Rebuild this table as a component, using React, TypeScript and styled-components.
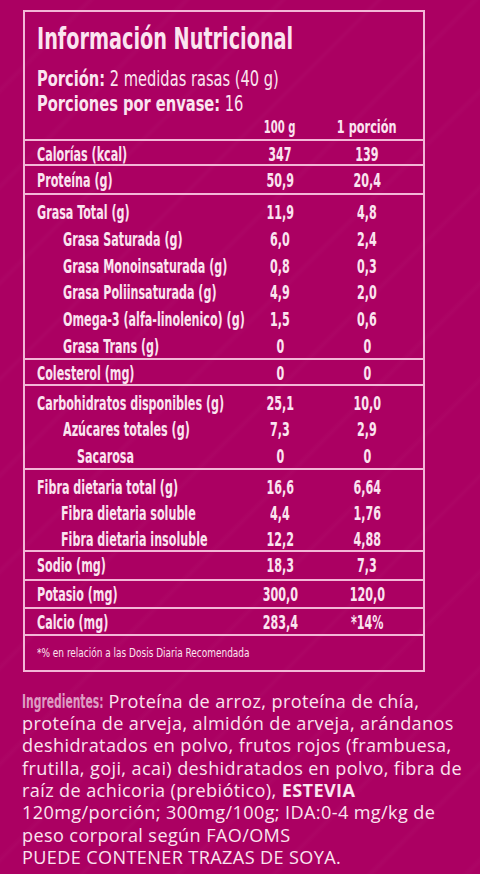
import { createGlobalStyle, styled } from "styled-components";

const GlobalStyle = createGlobalStyle`
  html, body {
    margin: 0;
    padding: 0;
    background: #ab0062;
  }
`;

const COND = `"Liberation Sans Narrow", "DejaVu Sans Condensed", "Liberation Sans", sans-serif`;
const INK = "#fbe4f0";
const RULE = "#f3b7d7";

const Page = styled.div`
  width: 480px;
  height: 874px;
  box-sizing: border-box;
  padding: 10px 22px 0 22px;
  overflow: hidden;
  background:
    repeating-linear-gradient(
      135deg,
      rgba(255, 255, 255, 0) 0px,
      rgba(255, 255, 255, 0) 60px,
      rgba(255, 255, 255, 0.018) 64px,
      rgba(255, 255, 255, 0) 68px
    ),
    #ab0062;
  color: ${INK};
`;

const Panel = styled.div`
  width: 402px;
  margin-left: 1px;
  box-sizing: border-box;
  border: 2px solid ${RULE};
  font-family: ${COND};
`;

const Head = styled.div`
  padding: 11px 12px 0 12px;
`;

const Squeeze = styled.span<{ $k?: number; $origin?: string }>`
  display: inline-block;
  white-space: nowrap;
  transform: scaleX(${(p) => p.$k ?? 0.62});
  transform-origin: ${(p) => p.$origin ?? "left"} center;
`;

const Title = styled.div`
  font-size: 31px;
  line-height: 31px;
  font-weight: 700;
  margin-bottom: 12px;
`;

const Serving = styled.div`
  font-size: 22px;
  line-height: 25px;
  b {
    font-weight: 700;
  }
`;

const Grid = styled.div`
  display: grid;
  grid-template-columns: minmax(0, 1fr) 80px 94px;
  padding: 0 9px 0 12px;
  align-items: center;
`;

const HeaderRow = styled(Grid)`
  box-sizing: border-box;
  height: 25px;
  padding-bottom: 4px;
  font-size: 18px;
  font-weight: 700;
  border-bottom: 2px solid ${RULE};
`;

const Section = styled.div`
  border-bottom: 2px solid ${RULE};
  padding: 1px 0;
`;

const Row = styled(Grid)<{ $h: number; $shift: number }>`
  box-sizing: border-box;
  height: ${(p) => p.$h}px;
  padding-top: ${(p) => p.$shift}px;
  font-size: 20px;
  font-weight: 700;
`;

const Label = styled.div<{ $indent: number }>`
  padding-left: ${(p) => p.$indent}px;
  min-width: 0;
`;

const Value = styled.div`
  text-align: center;
`;

const Footnote = styled.div`
  height: 34px;
  display: flex;
  align-items: center;
  padding-left: 12px;
  font-size: 12px;
`;

const Ingredients = styled.p`
  margin: 18px 0 0 0;
  font-family: "Open Sans", "Liberation Sans", sans-serif;
  font-size: 18.1px;
  letter-spacing: 0.38px;
  line-height: 22.3px;
  color: ${INK};
  white-space: nowrap;
  b {
    font-weight: 700;
  }
`;

const IngLabel = styled.span`
  display: inline-block;
  font-family: ${COND};
  font-weight: 700;
  font-size: 19px;
  letter-spacing: 0;
  color: #dd9dc3;
  transform: scaleX(0.63);
  transform-origin: left center;
  margin-right: -48px;
`;

type Line = [string, string, string, number];

const sections: { h: number; rows: Line[] }[] = [
  { h: 21, rows: [["Calorías (kcal)", "347", "139", 0]] },
  { h: 25, rows: [["Proteína (g)", "50,9", "20,4", 0]] },
  {
    h: 26.8,
    rows: [
      ["Grasa Total (g)", "11,9", "4,8", 0],
      ["Grasa Saturada (g)", "6,0", "2,4", 26],
      ["Grasa Monoinsaturada (g)", "0,8", "0,3", 26],
      ["Grasa Poliinsaturada (g)", "4,9", "2,0", 26],
      ["Omega-3 (alfa-linolenico) (g)", "1,5", "0,6", 26],
      ["Grasa Trans (g)", "0", "0", 26],
    ],
  },
  { h: 22, rows: [["Colesterol (mg)", "0", "0", 0]] },
  {
    h: 26.7,
    rows: [
      ["Carbohidratos disponibles (g)", "25,1", "10,0", 0],
      ["Azúcares totales (g)", "7,3", "2,9", 26],
      ["Sacarosa", "0", "0", 40],
    ],
  },
  {
    h: 26,
    rows: [
      ["Fibra dietaria total (g)", "16,6", "6,64", 0],
      ["Fibra dietaria soluble", "4,4", "1,76", 24],
      ["Fibra dietaria insoluble", "12,2", "4,88", 24],
    ],
  },
  { h: 25, rows: [["Sodio (mg)", "18,3", "7,3", 0]] },
  { h: 24, rows: [["Potasio (mg)", "300,0", "120,0", 0]] },
  { h: 23, rows: [["Calcio (mg)", "283,4", "*14%", 0]] },
];

export default function App() {
  return (
    <Page>
      <GlobalStyle />
      <Panel>
        <Head>
          <Title>
            <Squeeze $k={0.69}>Información Nutricional</Squeeze>
          </Title>
          <Serving>
            <Squeeze $k={0.74}>
              <b>Porción:</b> 2 medidas rasas (40 g)
            </Squeeze>
          </Serving>
          <Serving>
            <Squeeze $k={0.74}>
              <b>Porciones por envase:</b> 16
            </Squeeze>
          </Serving>
        </Head>
        <HeaderRow>
          <span />
          <Value>
            <Squeeze $origin="center" $k={0.62}>100 g</Squeeze>
          </Value>
          <Value>
            <Squeeze $origin="center" $k={0.7}>1 porción</Squeeze>
          </Value>
        </HeaderRow>
        {sections.map((s, i) => (
          <Section key={i}>
            {s.rows.map(([name, a, b, indent]) => (
              <Row key={name} $h={s.h} $shift={s.rows.length > 1 ? 4 : 0}>
                <Label $indent={indent}>
                  <Squeeze>{name}</Squeeze>
                </Label>
                <Value>
                  <Squeeze $origin="center">{a}</Squeeze>
                </Value>
                <Value>
                  <Squeeze $origin="center">{b}</Squeeze>
                </Value>
              </Row>
            ))}
          </Section>
        ))}
        <Footnote>
          <Squeeze $k={0.83}>*% en relación a las Dosis Diaria Recomendada</Squeeze>
        </Footnote>
      </Panel>
      <Ingredients>
        <IngLabel>Ingredientes:</IngLabel> Proteína de arroz, proteína de chía,
        <br />
        proteína de arveja, almidón de arveja, arándanos
        <br />
        deshidratados en polvo, frutos rojos (frambuesa,
        <br />
        frutilla, goji, acai) deshidratados en polvo, fibra de
        <br />
        raíz de achicoria (prebiótico), <b>ESTEVIA</b>
        <br />
        120mg/porción; 300mg/100g; IDA:0-4 mg/kg de
        <br />
        peso corporal según FAO/OMS
        <br />
        PUEDE CONTENER TRAZAS DE SOYA.
      </Ingredients>
    </Page>
  );
}
